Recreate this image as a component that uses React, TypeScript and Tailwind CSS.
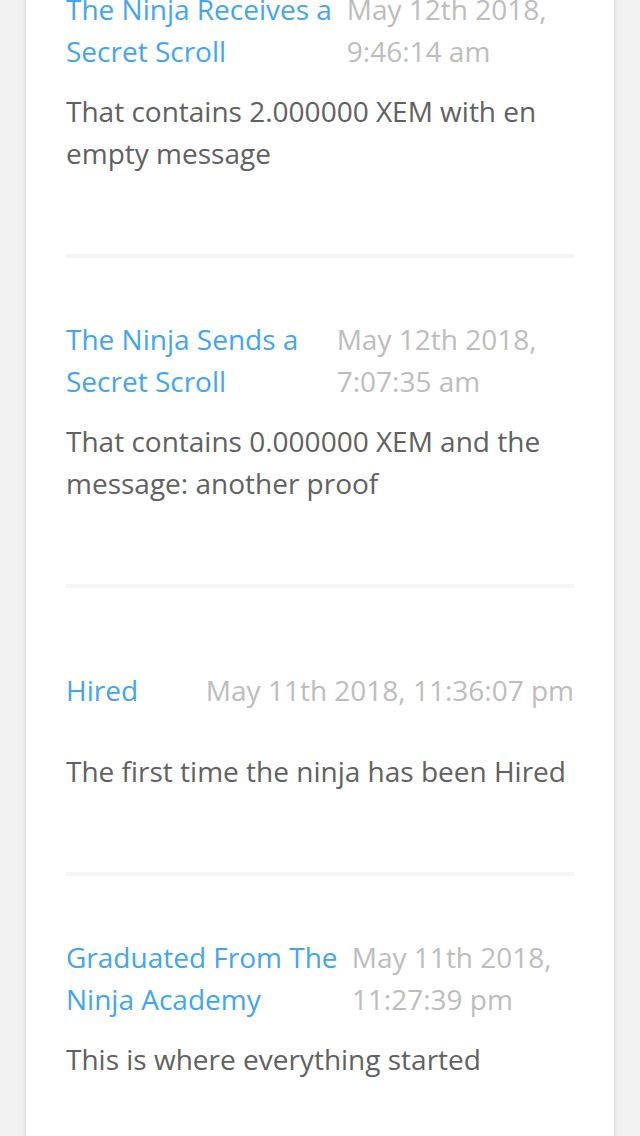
const events = [
  {
    title: "The Ninja Receives a Secret Scroll",
    date: "May 12th 2018, 9:46:14 am",
    text: "That contains 2.000000 XEM with en empty message",
  },
  {
    title: "The Ninja Sends a Secret Scroll",
    date: "May 12th 2018, 7:07:35 am",
    text: "That contains 0.000000 XEM and the message: another proof",
  },
  {
    title: "Hired",
    date: "May 11th 2018, 11:36:07 pm",
    text: "The first time the ninja has been Hired",
  },
  {
    title: "Graduated From The Ninja Academy",
    date: "May 11th 2018, 11:27:39 pm",
    text: "This is where everything started",
  },
];

export default function App() {
  return (
    <div
      className="h-screen overflow-hidden bg-[#f2f2f2]"
      style={{ fontFamily: '"Open Sans", "Liberation Sans", sans-serif' }}
    >
      <div className="mx-[26px] -mt-[72px] min-h-[1300px] bg-white px-10 shadow-[0_0_6px_rgba(0,0,0,0.14)]">
        {events.map((ev, i) => (
          <div
            key={i}
            className={`pt-[60px] pb-[80px] ${i < events.length - 1 ? "border-b-4 border-[#f5f5f5]" : ""}`}
          >
            <div className="flex min-h-[84px] items-center justify-between text-[28px] leading-[42px]">
              <div className="text-[#42a5f5]">{ev.title}</div>
              <div className="text-[#bdbdbd]">{ev.date}</div>
            </div>
            <p className="mt-[18px] text-[28px] leading-[42px] text-[#616161]">{ev.text}</p>
          </div>
        ))}
      </div>
    </div>
  );
}
